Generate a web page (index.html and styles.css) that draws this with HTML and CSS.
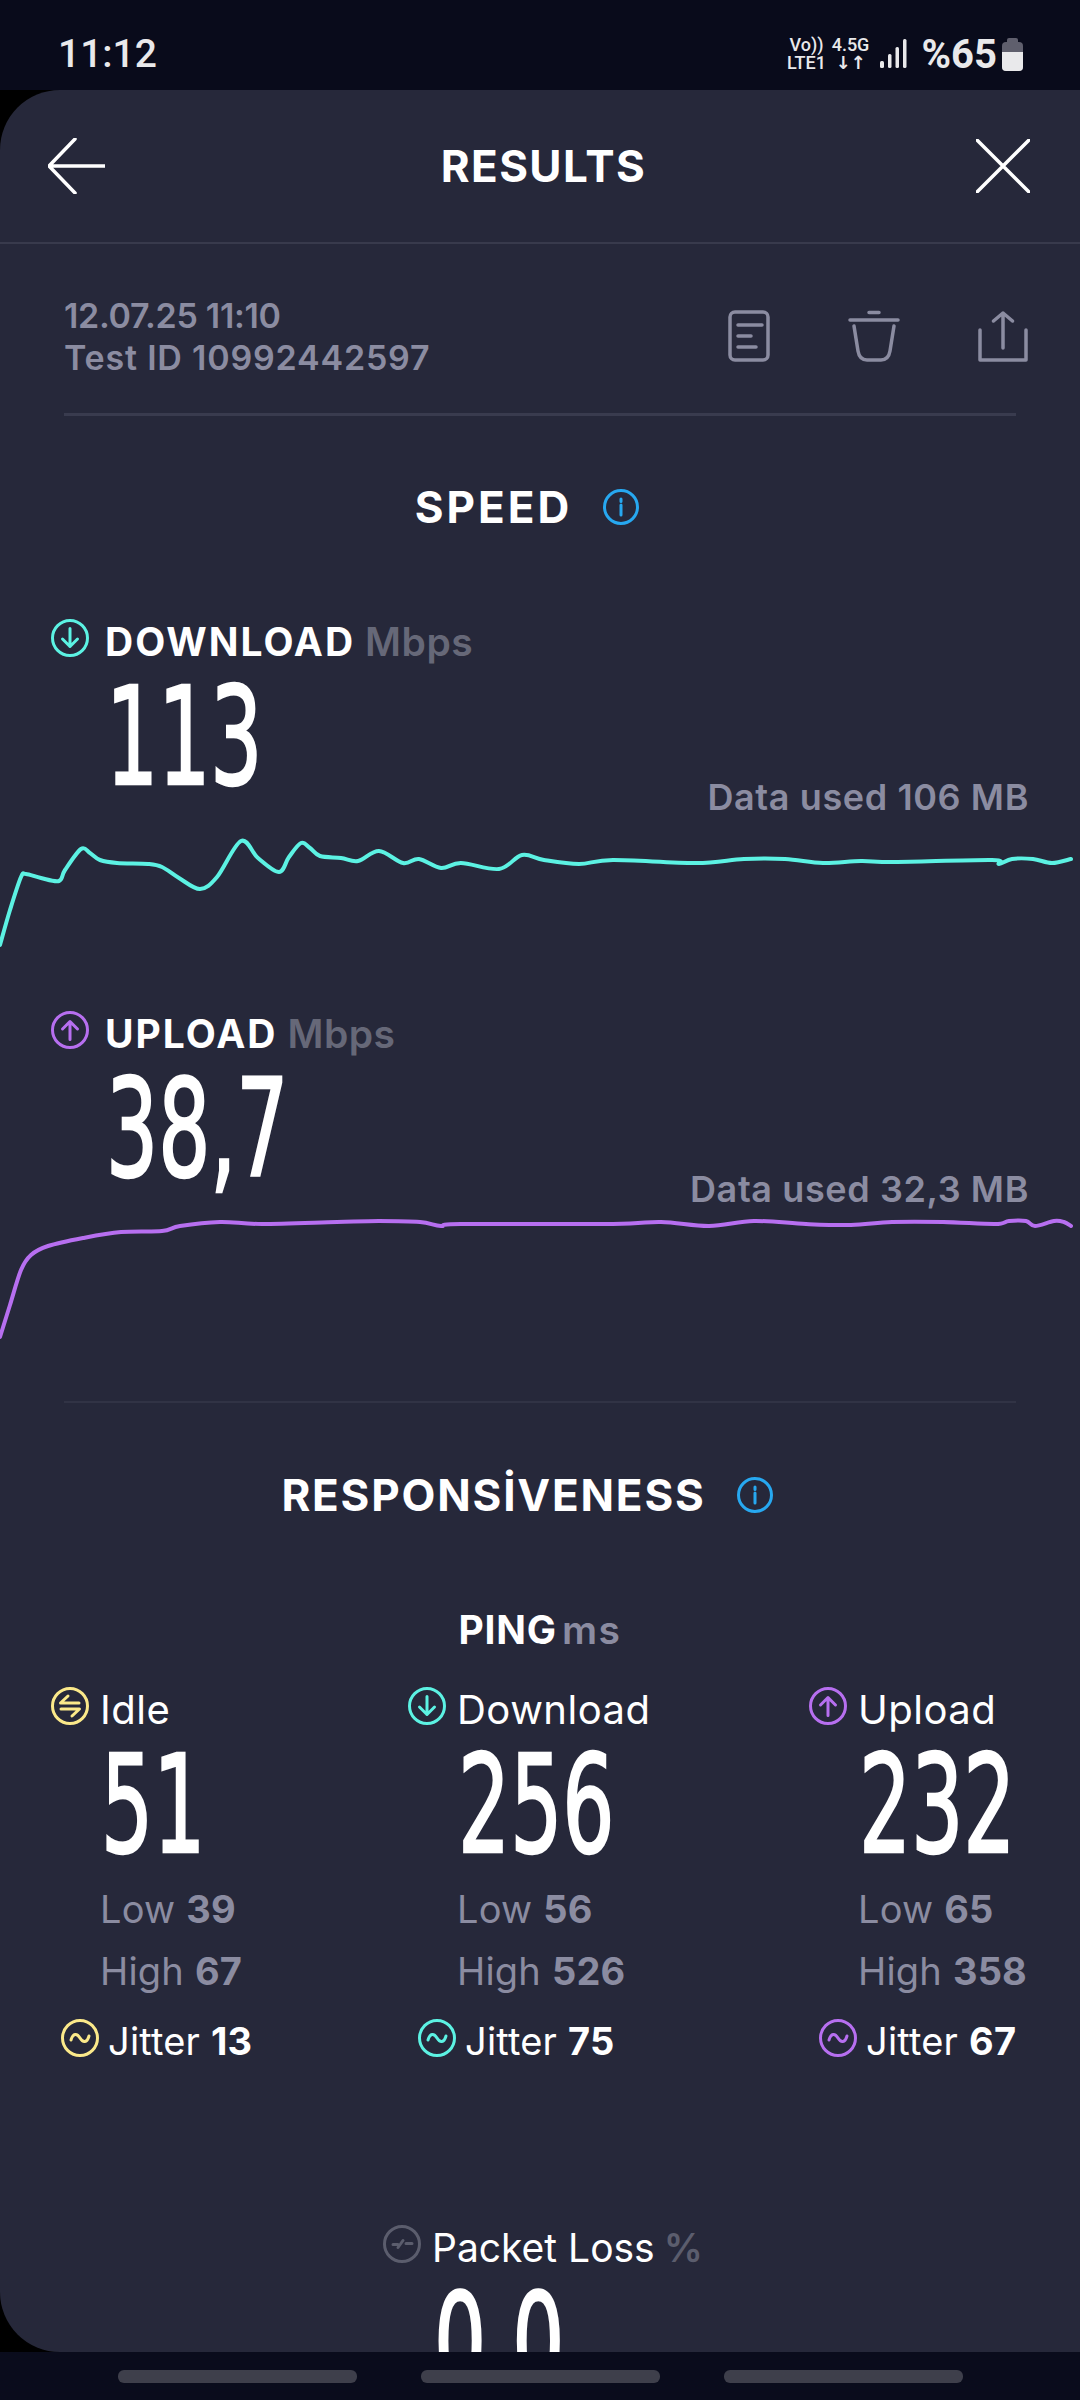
FILE: index.html
```html
<!DOCTYPE html>
<html lang="tr">
<head>
    <meta charset="UTF-8">
    <meta name="viewport" content="width=device-width, initial-scale=1.0">
    <title>Results</title>
    <link rel="stylesheet" href="styles.css">
</head>
<body>
    <!-- shared round icons -->
    <svg class="icon-defs" width="0" height="0">
        <symbol id="i-down" viewBox="0 0 38 38">
            <circle cx="19" cy="19" r="17.5"/>
            <path d="M19 9.5V27.5M11.5 20L19 27.5L26.5 20"/>
        </symbol>
        <symbol id="i-up" viewBox="0 0 38 38">
            <circle cx="19" cy="19" r="17.5"/>
            <path d="M19 28.5V10.5M11.5 18L19 10.5L26.5 18"/>
        </symbol>
        <symbol id="i-idle" viewBox="0 0 38 38">
            <circle cx="19" cy="19" r="17.5"/>
            <path d="M28 16H9.5L17 9M10 22H28.5L21 29"/>
        </symbol>
        <symbol id="i-jitter" viewBox="0 0 38 38">
            <circle cx="19" cy="19" r="17.5"/>
            <path d="M10 21C12 14 16 14 19 19C22 24 26 24 28 17"/>
        </symbol>
        <symbol id="i-loss" viewBox="0 0 38 38">
            <circle cx="19" cy="19" r="17.5"/>
            <path d="M10 19.5H15M15 22.5L20 15.5M23 18.5H29"/>
        </symbol>
        <symbol id="i-info" viewBox="0 0 36 36">
            <circle cx="18" cy="18" r="16.5"/>
            <path d="M18 16V26M18 10V12.5"/>
        </symbol>
    </svg>

    <div class="status-bar">
        <span class="clock">11:12</span>
        <div class="status-right">
            <div class="net-col">
                <span>Vo))</span>
                <span>LTE1</span>
            </div>
            <div class="net-col net-col-two">
                <span>4.5G</span>
                <span class="net-arrows">↓↑</span>
            </div>
            <svg class="signal" width="27" height="30" viewBox="0 0 27 30">
                <rect x="0" y="22" width="4" height="7" rx="1.5"/>
                <rect x="8" y="15" width="3.5" height="14" rx="1.5"/>
                <rect x="15.5" y="8" width="3.5" height="21" rx="1.5"/>
                <rect x="23" y="0" width="3.5" height="29" rx="1.5"/>
            </svg>
            <span class="battery-text">%65</span>
            <div class="battery"><div class="battery-fill"></div></div>
        </div>
    </div>

    <div class="panel">
        <div class="top-bar">
            <svg class="top-icon" width="57" height="56" viewBox="0 0 57 56">
                <path d="M27 1L1 28L27 55M1 28H57"/>
            </svg>
            <h1 class="top-title">RESULTS</h1>
            <svg class="top-icon" width="54" height="54" viewBox="0 0 54 54">
                <path d="M1 1L53 53M53 1L1 53"/>
            </svg>
        </div>

        <div class="meta">
            <div class="meta-text">
                <div class="meta-date">12.07.25 11:10</div>
                <div class="meta-id">Test ID 10992442597</div>
            </div>
            <div class="meta-icons">
                <svg width="42" height="52" viewBox="0 0 42 52">
                    <rect x="2" y="2" width="38" height="48" rx="5"/>
                    <path d="M10 15H34M10 26H23M10 37H28"/>
                </svg>
                <svg width="52" height="52" viewBox="0 0 52 52">
                    <path d="M2 10H50M21 2.500H31M6 16L10 41C11 47 14 50 19 50H33C38 50 41 47 42 41L46 16"/>
                </svg>
                <svg width="50" height="52" viewBox="0 0 50 52">
                    <path d="M25 38V3M15.500 11L25 3L34.500 11M2 20V50H48V20"/>
                </svg>
            </div>
        </div>

        <div class="section-title speed-title">
            <h2>SPEED</h2>
            <svg class="info" width="36" height="36"><use href="#i-info"/></svg>
        </div>

        <div class="metric">
            <div class="metric-head">
                <div>
                    <div class="metric-label">
                        <svg class="round down" width="38" height="38"><use href="#i-down"/></svg>
                        <span class="metric-name">DOWNLOAD</span>
                        <span class="metric-unit">Mbps</span>
                    </div>
                    <div class="big-num"><span>113</span></div>
                </div>
                <div class="data-used">Data used 106 MB</div>
            </div>
            <svg class="graph down" width="1080" height="130" viewBox="0 -12 1080 130">
                <path id="graphDown"/>
            </svg>
        </div>

        <div class="metric metric-last">
            <div class="metric-head">
                <div>
                    <div class="metric-label">
                        <svg class="round up" width="38" height="38"><use href="#i-up"/></svg>
                        <span class="metric-name">UPLOAD</span>
                        <span class="metric-unit">Mbps</span>
                    </div>
                    <div class="big-num"><span>38,7</span></div>
                </div>
                <div class="data-used">Data used 32,3 MB</div>
            </div>
            <svg class="graph up" width="1080" height="130" viewBox="0 0 1080 130">
                <path id="graphUp"/>
            </svg>
        </div>

        <div class="divider"></div>

        <div class="section-title resp-title">
            <h2>RESPONSİVENESS</h2>
            <svg class="info" width="36" height="36"><use href="#i-info"/></svg>
        </div>

        <div class="ping-title">PING <span>ms</span></div>

        <div class="ping-grid">
            <div class="ping-col">
                <div class="ping-label">
                    <svg class="round idle" width="38" height="38"><use href="#i-idle"/></svg>
                    <span>Idle</span>
                </div>
                <div class="big-num"><span>51</span></div>
                <div class="ping-stat">Low <b>39</b></div>
                <div class="ping-stat">High <b>67</b></div>
                <div class="jitter">
                    <svg class="round idle" width="38" height="38"><use href="#i-jitter"/></svg>
                    <span>Jitter <b>13</b></span>
                </div>
            </div>
            <div class="ping-col">
                <div class="ping-label">
                    <svg class="round down" width="38" height="38"><use href="#i-down"/></svg>
                    <span>Download</span>
                </div>
                <div class="big-num"><span>256</span></div>
                <div class="ping-stat">Low <b>56</b></div>
                <div class="ping-stat">High <b>526</b></div>
                <div class="jitter">
                    <svg class="round down" width="38" height="38"><use href="#i-jitter"/></svg>
                    <span>Jitter <b>75</b></span>
                </div>
            </div>
            <div class="ping-col">
                <div class="ping-label">
                    <svg class="round up" width="38" height="38"><use href="#i-up"/></svg>
                    <span>Upload</span>
                </div>
                <div class="big-num"><span>232</span></div>
                <div class="ping-stat">Low <b>65</b></div>
                <div class="ping-stat">High <b>358</b></div>
                <div class="jitter">
                    <svg class="round up" width="38" height="38"><use href="#i-jitter"/></svg>
                    <span>Jitter <b>67</b></span>
                </div>
            </div>
        </div>

        <div class="packet">
            <div class="packet-label">
                <svg class="round loss" width="38" height="38"><use href="#i-loss"/></svg>
                <span>Packet Loss</span>
                <span class="packet-unit">%</span>
            </div>
            <div class="big-num packet-num"><span>0,0</span></div>
        </div>
    </div>

    <div class="nav-bar">
        <div class="nav-pill"></div>
        <div class="nav-pill"></div>
        <div class="nav-pill"></div>
    </div>

    <script src="graph.js"></script>
</body>
</html>
```

FILE: styles.css
```css
* {
    margin: 0;
    padding: 0;
    box-sizing: border-box;
}

body {
    width: 1080px;
    height: 2400px;
    overflow: hidden;
    background: #000;
    font-family: Inter, "Noto Sans", sans-serif;
    color: #fff;
}

.icon-defs {
    position: absolute;
}

/* status bar */
.status-bar {
    height: 90px;
    background: #090b1b;
    display: flex;
    align-items: center;
    justify-content: space-between;
    padding: 18px 57px 0 58px;
    color: #e9e9eb;
    font-family: Roboto, sans-serif;
}

.clock {
    font-size: 39px;
    font-weight: 500;
}

.status-right {
    display: flex;
    align-items: center;
}

.net-col {
    display: flex;
    flex-direction: column;
    align-items: center;
    font-size: 18px;
    font-weight: 500;
    line-height: 18px;
    width: 38px;
}

.net-col-two {
    margin-left: 6px;
}

.net-arrows {
    font-family: "DejaVu Sans", sans-serif;
    font-size: 18px;
    font-weight: 700;
}

.signal {
    margin-left: 10px;
    fill: #e9e9eb;
}

.battery-text {
    font-size: 40px;
    font-weight: 700;
    margin-left: 15px;
}

.battery {
    width: 21px;
    height: 29px;
    margin-left: 5px;
    margin-top: 4px;
    background: #5f5f6d;
    border-radius: 4px;
    position: relative;
    display: flex;
    align-items: flex-end;
}

.battery::before {
    content: "";
    position: absolute;
    top: -4px;
    left: 5px;
    width: 11px;
    height: 5px;
    border-radius: 2px 2px 0 0;
    background: #5f5f6d;
}

.battery-fill {
    width: 100%;
    height: 19px;
    background: #e9e9eb;
    border-radius: 0 0 4px 4px;
}

/* main panel */
.panel {
    height: 2262px;
    background: #26283a;
    border-radius: 60px 0 0 60px;
    overflow: hidden;
}

.top-bar {
    height: 154px;
    border-bottom: 2px solid #383a4c;
    display: flex;
    align-items: center;
    justify-content: space-between;
    padding: 0 50px 1px 48px;
}

.top-icon {
    fill: none;
    stroke: #fff;
    stroke-width: 3.5;
    stroke-linecap: round;
    stroke-linejoin: round;
}

.top-title {
    font-size: 44px;
    font-weight: 700;
    letter-spacing: 1.4px;
    margin-left: 6px;
}

.meta {
    margin: 51px 64px 0;
    padding-bottom: 34px;
    border-bottom: 3px solid #393b4e;
    display: flex;
    justify-content: space-between;
    align-items: center;
}

.meta-text {
    font-size: 34px;
    font-weight: 600;
    line-height: 42px;
    color: #8b8ca1;
}

.meta-date {
    letter-spacing: -0.3px;
}

.meta-id {
    letter-spacing: 0.8px;
}

.meta-icons {
    display: flex;
    gap: 78px;
    margin: -2px -12px 0 0;
}

.meta-icons svg {
    fill: none;
    stroke: #8b8ca1;
    stroke-width: 3.5;
    stroke-linecap: round;
    stroke-linejoin: round;
}

.section-title {
    height: 50px;
    display: flex;
    align-items: center;
    justify-content: center;
    gap: 31px;
    padding-right: 26px;
}

.section-title h2 {
    font-size: 44px;
    font-weight: 700;
    letter-spacing: 1.8px;
}

.speed-title {
    margin-top: 66px;
}

.speed-title h2 {
    letter-spacing: 3px;
}

.resp-title {
    margin-top: 67px;
}

.info {
    fill: none;
    stroke: #27a8f0;
    stroke-width: 3;
    stroke-linecap: round;
}

/* round icons, colour comes from the class */
.round {
    fill: none;
    stroke-width: 3;
    stroke-linecap: round;
    stroke-linejoin: round;
    flex-shrink: 0;
    margin-top: -6px;
}

.down {
    stroke: #5cf2e3;
}

.up {
    stroke: #b76ff0;
}

.idle {
    stroke: #fbe98a;
}

.loss {
    stroke: #5b5d6d;
}

/* speed blocks */
.metric {
    margin-top: 87px;
    height: 334px;
}

.metric + .metric {
    margin-top: 58px;
}

.metric-head {
    height: 204px;
    display: flex;
    justify-content: space-between;
    padding: 0 51px;
}

.metric-label {
    display: flex;
    align-items: center;
    height: 44px;
}

.metric-name {
    font-size: 39px;
    font-weight: 700;
    letter-spacing: 2px;
    margin-left: 16px;
}

.metric-unit {
    font-size: 39px;
    font-weight: 600;
    letter-spacing: 0.5px;
    color: #666878;
    margin-left: 10px;
}

.data-used {
    font-size: 36px;
    font-weight: 600;
    letter-spacing: 0.6px;
    color: #8b8ca1;
    margin-top: 157px;
    line-height: 42px;
}

.big-num {
    height: 110px;
    margin-top: 18px;
    margin-left: 55px;
    font-family: "DejaVu Sans", sans-serif;
    font-stretch: condensed;
    font-size: 136px;
    line-height: 112px;
    -webkit-text-stroke: 2.5px #fff;
    white-space: nowrap;
}

.big-num span {
    display: inline-block;
    transform: scaleX(0.67);
    transform-origin: left center;
}

.graph {
    display: block;
    fill: none;
    stroke-width: 4;
    stroke-linejoin: round;
    stroke-linecap: round;
}

.divider {
    height: 2px;
    margin: 56px 64px 0;
    background: #313345;
}

/* ping */
.ping-title {
    margin-top: 88px;
    text-align: center;
    font-size: 39px;
    font-weight: 700;
    line-height: 44px;
    letter-spacing: 0.8px;
}

.ping-title span {
    font-weight: 600;
    color: #8b8ca1;
    margin-left: -5px;
    letter-spacing: 1.5px;
}

.ping-grid {
    display: grid;
    grid-template-columns: 357px 401px 1fr;
    padding-left: 51px;
    margin-top: 35px;
}

.ping-label {
    display: flex;
    align-items: center;
    height: 44px;
    gap: 11px;
    font-size: 40px;
    letter-spacing: 0.5px;
}

.ping-col .big-num {
    margin-left: 50px;
}

.ping-stat {
    margin-left: 49px;
    font-size: 38px;
    letter-spacing: 0.2px;
    line-height: 62px;
    color: #8b8ca1;
}

.ping-stat b {
    font-weight: 700;
}

.big-num + .ping-stat {
    margin-top: 19px;
}

.jitter {
    display: flex;
    align-items: center;
    gap: 9px;
    height: 44px;
    margin: 17px 0 0 10px;
    font-size: 38px;
    letter-spacing: 0.2px;
}

.jitter b {
    font-weight: 700;
}

/* packet loss */
.packet {
    margin-top: 162px;
    padding-left: 383px;
}

.packet-label {
    display: flex;
    align-items: center;
    height: 44px;
    font-size: 39px;
}

.packet-label span {
    margin-left: 11px;
}

.packet-label .packet-unit {
    color: #5b5d6d;
    font-weight: 600;
    margin-left: 9px;
}

.packet-num {
    margin-left: 51px;
}

/* bottom nav */
.nav-bar {
    height: 48px;
    background: #0a0c1c;
    display: flex;
    justify-content: center;
    gap: 64px;
    padding-top: 18px;
}

.nav-pill {
    width: 239px;
    height: 13px;
    border-radius: 6px;
    background: #3e3f4b;
}
```

FILE: graph.js
```js
// Speed samples as x,y pairs in graph pixels
const downSamples = [
    [0,110],[10,75],[21,42],[26,39],[41,43],[59,46],[65,35],[81,14],[90,18],[100,25],
    [117,28],[148,29],[162,32],[179,43],[200,54],[217,42],[241,6],[258,23],[279,37],[289,22],
    [301,8],[310,13],[320,21],[341,23],[358,26],[379,16],[403,28],[419,24],[441,33],[461,28],
    [499,34],[522,20],[544,25],[579,29],[613,25],[696,28],[744,24],[785,24],[823,28],[861,26],
    [895,27],[992,25],[999,29],[1012,24],[1033,24],[1052,28],[1071,24]
];

const upSamples = [
    [0,122],[10,90],[21,55],[31,40],[48,31],[83,23],[121,17],[162,16],[180,11],[220,7],
    [262,9],[337,7],[379,6],[420,7],[441,11],[461,9],[613,9],[661,7],[709,11],[754,6],
    [806,9],[851,10],[892,7],[943,7],[995,9],[1009,6],[1026,6],[1035,11],[1054,6],[1064,7],
    [1071,11]
];

// Catmull-Rom through the samples, written out as cubic beziers
function smoothPath(pts) {
    let d = `M${pts[0][0]} ${pts[0][1]}`;
    for (let i = 0; i < pts.length - 1; i++) {
        const p0 = pts[i - 1] || pts[i];
        const p1 = pts[i];
        const p2 = pts[i + 1];
        const p3 = pts[i + 2] || p2;
        const c1x = p1[0] + (p2[0] - p0[0]) / 6;
        const c1y = p1[1] + (p2[1] - p0[1]) / 6;
        const c2x = p2[0] - (p3[0] - p1[0]) / 6;
        const c2y = p2[1] - (p3[1] - p1[1]) / 6;
        d += `C${c1x} ${c1y} ${c2x} ${c2y} ${p2[0]} ${p2[1]}`;
    }
    return d;
}

document.getElementById('graphDown').setAttribute('d', smoothPath(downSamples));
document.getElementById('graphUp').setAttribute('d', smoothPath(upSamples));
```
